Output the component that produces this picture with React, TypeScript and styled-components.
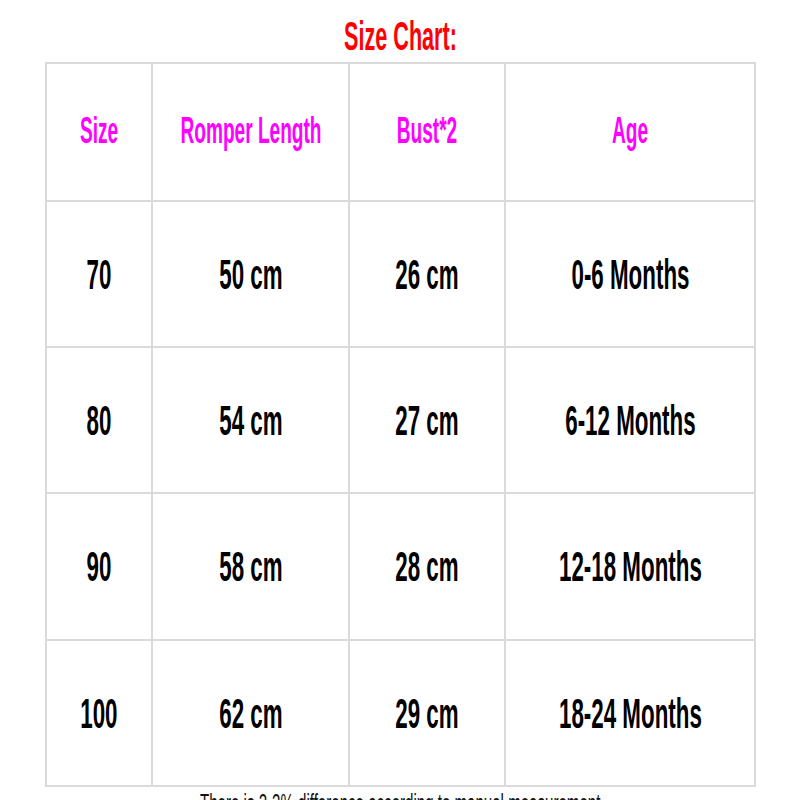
import React from "react";
import styled, { createGlobalStyle } from "styled-components";

const Global = createGlobalStyle`
  html, body { margin: 0; padding: 0; background: #ffffff; }
  body { font-family: "Liberation Sans", Arial, sans-serif; }
`;

const Page = styled.div`
  width: 800px;
  height: 800px;
  overflow: hidden;
  display: flex;
  flex-direction: column;
  align-items: center;
  background: #ffffff;
  & > * { flex-shrink: 0; }
`;

const TitleBar = styled.div`
  height: 62px;
  box-sizing: border-box;
  padding-top: 16px;
  display: flex;
  justify-content: center;
  align-items: flex-start;
`;

const Narrow = styled.span<{ $scale?: number }>`
  display: inline-block;
  white-space: nowrap;
  transform: scaleX(${(p) => p.$scale ?? 0.53});
  transform-origin: center;
`;

const Title = styled.h1`
  margin: 0;
  font-size: 40px;
  line-height: 40px;
  font-weight: 700;
  color: #ff0000;
`;

const Grid = styled.div`
  display: grid;
  grid-template-columns: 104px 195px 154px 248px;
  grid-template-rows: 136px 144px 144px 145px 144px;
  gap: 2px;
  padding: 2px;
  background: #dadada;
  margin-left: 1px;
`;

const Cell = styled.div<{ $head?: boolean }>`
  background: #ffffff;
  display: flex;
  align-items: center;
  justify-content: center;
  font-weight: 700;
  font-size: ${(p) => (p.$head ? "36px" : "43px")};
  line-height: 1;
  color: ${(p) => (p.$head ? "#ff00ff" : "#000000")};
  padding-bottom: ${(p) => (p.$head ? "2px" : "0")};
`;

const Note = styled.p`
  margin: 3px 0 0 0;
  font-size: 26px;
  line-height: 26px;
  color: #111111;
  text-align: center;
`;

const headers = ["Size", "Romper Length", "Bust*2", "Age"];
const rows = [
  ["70", "50 cm", "26 cm", "0-6 Months"],
  ["80", "54 cm", "27 cm", "6-12 Months"],
  ["90", "58 cm", "28 cm", "12-18 Months"],
  ["100", "62 cm", "29 cm", "18-24 Months"],
];

export default function App() {
  return (
    <Page>
      <Global />
      <TitleBar>
        <Title>
          <Narrow $scale={0.54}>Size Chart:</Narrow>
        </Title>
      </TitleBar>
      <Grid>
        {headers.map((h) => (
          <Cell key={h} $head>
            <Narrow $scale={0.53}>{h}</Narrow>
          </Cell>
        ))}
        {rows.map((r) =>
          r.map((v, i) => (
            <Cell key={r[0] + "-" + i}>
              <Narrow $scale={0.52}>{v}</Narrow>
            </Cell>
          ))
        )}
      </Grid>
      <Note>
        <Narrow $scale={0.58}>There is 2-3% difference according to manual measurement</Narrow>
      </Note>
    </Page>
  );
}
